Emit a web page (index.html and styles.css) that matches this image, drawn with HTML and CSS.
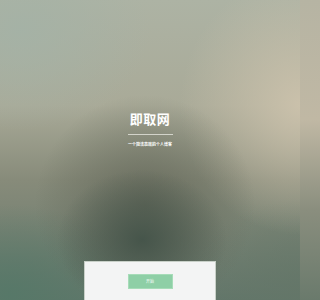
FILE: index.html
```html
<!DOCTYPE html>
<html lang="zh">
<head>
<meta charset="utf-8">
<title>即取网</title>
<link rel="stylesheet" href="styles.css">
</head>
<body>
<div class="page">
  <header class="hero">
    <h1 class="title">即取网</h1>
    <div class="rule"></div>
    <p class="subtitle">一个简洁高效的个人博客</p>
  </header>
  <section class="card">
    <a class="btn" href="#">开始</a>
  </section>
</div>
</body>
</html>
```
FILE: styles.css
```css
html, body {
  margin: 0;
  padding: 0;
  height: 100%;
  overflow: hidden;
}
body {
  font-family: "Noto Sans CJK SC", "Noto Sans", sans-serif;
  background: linear-gradient(180deg, #b6b4a3 0%, #c0b8a4 40%, #8a8e7e 70%, #6a7a6c 100%);
}
.page {
  width: 300px;
  height: 300px;
  display: flex;
  flex-direction: column;
  align-items: center;
  background:
    radial-gradient(ellipse 85px 70px at 142px 240px, rgba(66, 82, 72, 0.9), rgba(66, 82, 72, 0) 100%),
    radial-gradient(ellipse 110px 110px at 145px 205px, rgba(96, 100, 86, 0.8), rgba(96, 100, 86, 0) 100%),
    radial-gradient(ellipse 120px 130px at 300px 105px, rgba(204, 194, 172, 0.95), rgba(204, 194, 172, 0) 100%),
    radial-gradient(ellipse 130px 100px at 20px 30px, rgba(164, 178, 166, 0.9), rgba(164, 178, 166, 0) 100%),
    radial-gradient(ellipse 140px 90px at 10px 295px, rgba(86, 120, 104, 0.95), rgba(86, 120, 104, 0) 100%),
    radial-gradient(ellipse 110px 90px at 300px 290px, rgba(100, 118, 104, 0.8), rgba(100, 118, 104, 0) 100%),
    linear-gradient(180deg, #adb3a4 0%, #a9aa98 35%, #878b7a 60%, #62766a 100%);
}
.hero {
  padding-top: 106px;
  display: flex;
  flex-direction: column;
  align-items: center;
}
.title {
  margin: 0;
  font-size: 13px;
  line-height: 26px;
  font-weight: 700;
  color: #ffffff;
  letter-spacing: 0.5px;
}
.rule {
  width: 45px;
  height: 1px;
  margin-top: 2px;
  background: rgba(235, 235, 228, 0.75);
}
.subtitle {
  margin: 6px 0 0;
  font-size: 4px;
  line-height: 6px;
  font-weight: 700;
  color: #ffffff;
}
.card {
  margin-top: auto;
  width: 130px;
  height: 38px;
  background: #f3f4f4;
  border: 1px solid #c8d0c8;
  border-bottom: none;
  display: flex;
  justify-content: center;
}
.btn {
  margin-top: 12px;
  width: 43px;
  height: 13px;
  background: #8ecfa6;
  border: 1px solid #a6dcb8;
  color: #ffffff;
  font-size: 4px;
  line-height: 13px;
  text-align: center;
  text-decoration: none;
}
```
